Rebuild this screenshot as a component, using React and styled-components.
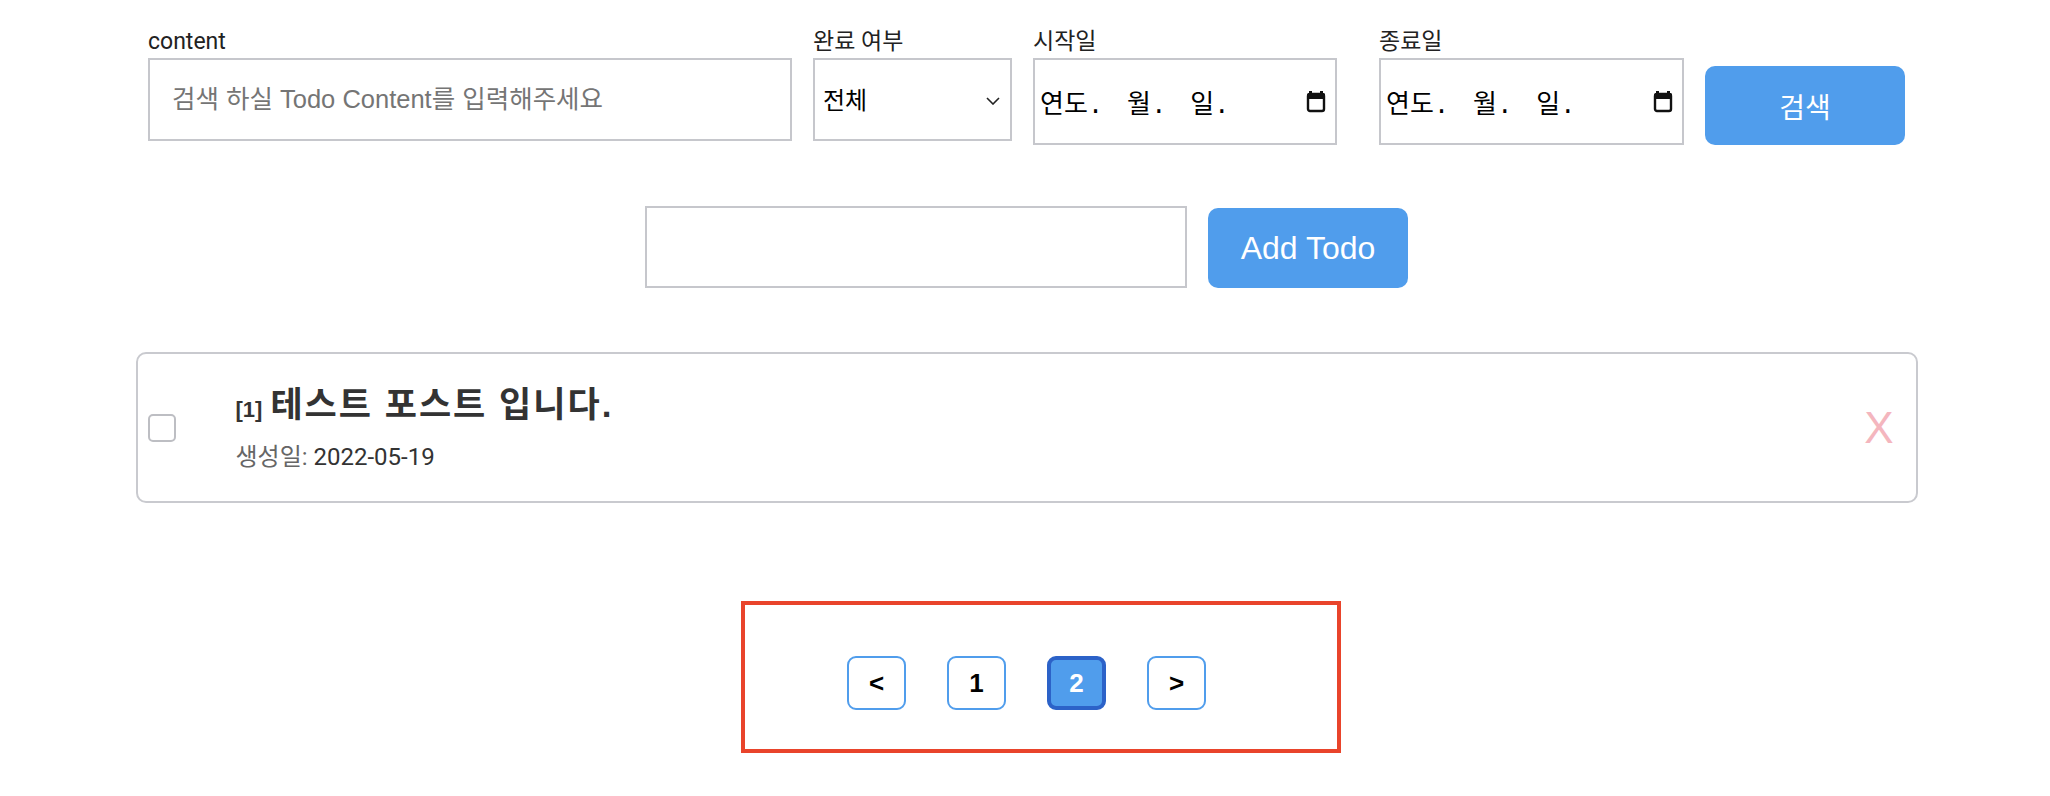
import React from 'react'
import styled, { createGlobalStyle } from 'styled-components'

const GlobalStyle = createGlobalStyle`
  * {
    box-sizing: border-box;
  }
  html, body {
    margin: 0;
    padding: 0;
    background: #fff;
  }
  body {
    font-family: "Liberation Sans", "Noto Sans CJK KR", sans-serif;
    color: #222;
  }
`

const Page = styled.div`
  width: 2050px;
  padding: 28px 0 0 3px;
  display: flex;
  flex-direction: column;
  align-items: center;
`

const SearchBar = styled.form`
  display: flex;
  align-items: flex-start;
  gap: 21px;
`

const Field = styled.label`
  display: flex;
  flex-direction: column;
  width: ${props => props.$width}px;
`

const FieldLabel = styled.span`
  font-family: Roboto, "Noto Sans CJK KR", sans-serif;
  font-size: 23px;
  line-height: 28px;
  margin-bottom: 2px;
  color: #222;
`

const TextInput = styled.input`
  width: ${props => props.$width ? `${props.$width}px` : '100%'};
  height: ${props => props.$height || 83}px;
  border: 2px solid #c6c7cc;
  border-radius: 0;
  padding: 0 22px;
  font: 25.5px "Liberation Sans", "Noto Sans CJK KR", sans-serif;
  color: #222;
  outline: none;

  &::placeholder {
    color: #757575;
  }
`

const SelectBox = styled.div`
  height: 83px;
  border: 2px solid #c6c7cc;
  display: flex;
  align-items: center;
  padding: 2px 10px 0 8px;
  background: #fff;
`

const Select = styled.select`
  appearance: none;
  flex: 1;
  border: none;
  outline: none;
  background: transparent;
  padding: 0;
  font: 24px "Liberation Sans", "Noto Sans CJK KR", sans-serif;
  color: #000;
`

const DateBox = styled.div`
  width: ${props => props.$width}px;
  height: 87px;
  border: 2px solid #c6c7cc;
  display: flex;
  align-items: center;
  justify-content: space-between;
  padding: 0 9px 0 5px;
`

const DateText = styled.span`
  font: 26px "Liberation Mono", "Noto Sans CJK KR", monospace;
  word-spacing: 8px;
  color: #000;
`

const BlueButton = styled.button`
  width: 200px;
  height: ${props => props.$height}px;
  align-self: flex-end;
  border: none;
  border-radius: 10px;
  background: #509dec;
  color: #fff;
  font: ${props => props.$size}px "Liberation Sans", "Noto Sans CJK KR", sans-serif;
  cursor: pointer;
`

const AddRow = styled.div`
  margin-top: 61px;
  display: flex;
  align-items: flex-start;
  gap: 21px;
`

const TodoCard = styled.div`
  margin-top: 64px;
  width: 1782px;
  height: 151px;
  border: 2px solid #c9cacf;
  border-radius: 10px;
  display: flex;
  align-items: center;
  padding: 0 22px 0 10px;
`

const CheckBox = styled.input`
  appearance: none;
  margin: 0;
  width: 28px;
  height: 28px;
  border: 2px solid #bdbec3;
  border-radius: 5px;
  background: #fff;
`

const TodoBody = styled.div`
  flex: 1;
  margin-left: 60px;
`

const TodoTitle = styled.div`
  font-size: 35px;
  font-weight: bold;
  letter-spacing: 2px;
  line-height: 44px;
  color: #333;
`

const TodoIndex = styled.span`
  font-size: 22px;
  letter-spacing: 0;
  margin-right: 8px;
`

const TodoDate = styled.div`
  margin-top: 10px;
  font-family: Roboto, "Noto Sans CJK KR", sans-serif;
  font-size: 24px;
  line-height: 30px;
  color: #333;

  span {
    color: #666;
  }
`

const DeleteButton = styled.button`
  border: none;
  background: none;
  padding: 0;
  font: 44px "Liberation Sans", sans-serif;
  line-height: 1;
  color: #f4b6be;
  cursor: pointer;
`

const PagerFrame = styled.div`
  margin: 98px 0 0 29px;
  width: 600px;
  height: 152px;
  border: 4px solid #e9442b;
  display: flex;
  align-items: flex-start;
  gap: 41px;
  padding: 51px 0 0 102px;
`

const PageButton = styled.button`
  width: 59px;
  height: 54px;
  padding: 0;
  border: ${props => props.$active ? '4px solid #2c62c8' : '2px solid #509dec'};
  border-radius: 9px;
  background: ${props => props.$active ? '#509dec' : '#fff'};
  color: ${props => props.$active ? '#fff' : '#000'};
  font: bold 26px "Liberation Sans", sans-serif;
  display: flex;
  align-items: center;
  justify-content: center;
  cursor: pointer;
`

const Chevron = () => (
  <svg width="14" height="8" viewBox="0 0 14 8">
    <polyline points="1,1 7,7 13,1" fill="none" stroke="#222" strokeWidth="1.6" />
  </svg>
)

const CalendarIcon = () => (
  <svg width="20" height="22" viewBox="0 0 20 22">
    <rect x="3" y="0" width="3" height="4" fill="#111" />
    <rect x="14" y="0" width="3" height="4" fill="#111" />
    <rect x="2" y="3" width="16" height="17" rx="2" fill="none" stroke="#111" strokeWidth="2.4" />
    <rect x="1" y="2" width="18" height="6" rx="2" fill="#111" />
  </svg>
)

const DateField = ({ label, width, boxWidth }) => (
  <Field $width={width}>
    <FieldLabel>{label}</FieldLabel>
    <DateBox $width={boxWidth}>
      <DateText>연도. 월. 일.</DateText>
      <CalendarIcon />
    </DateBox>
  </Field>
)

const pages = ['<', '1', '2', '>']

const App = () => {
  return (
    <>
      <GlobalStyle />
      <Page>
        <SearchBar onSubmit={e => e.preventDefault()}>
          <Field $width={644}>
            <FieldLabel>content</FieldLabel>
            <TextInput placeholder="검색 하실 Todo Content를 입력해주세요" />
          </Field>
          <Field $width={199}>
            <FieldLabel>완료 여부</FieldLabel>
            <SelectBox>
              <Select defaultValue="all">
                <option value="all">전체</option>
                <option value="done">완료</option>
                <option value="todo">미완료</option>
              </Select>
              <Chevron />
            </SelectBox>
          </Field>
          <DateField label="시작일" width={325} boxWidth={304} />
          <DateField label="종료일" width={305} boxWidth={305} />
          <BlueButton type="submit" $height={79} $size={28}>검색</BlueButton>
        </SearchBar>

        <AddRow>
          <TextInput $width={542} $height={82} />
          <BlueButton $height={80} $size={32}>Add Todo</BlueButton>
        </AddRow>

        <TodoCard>
          <CheckBox type="checkbox" />
          <TodoBody>
            <TodoTitle>
              <TodoIndex>[1]</TodoIndex>테스트 포스트 입니다.
            </TodoTitle>
            <TodoDate><span>생성일:</span> 2022-05-19</TodoDate>
          </TodoBody>
          <DeleteButton>X</DeleteButton>
        </TodoCard>

        <PagerFrame>
          {pages.map((p, i) => (
            <PageButton key={i} $active={p === '2'}>{p}</PageButton>
          ))}
        </PagerFrame>
      </Page>
    </>
  )
}

export default App
